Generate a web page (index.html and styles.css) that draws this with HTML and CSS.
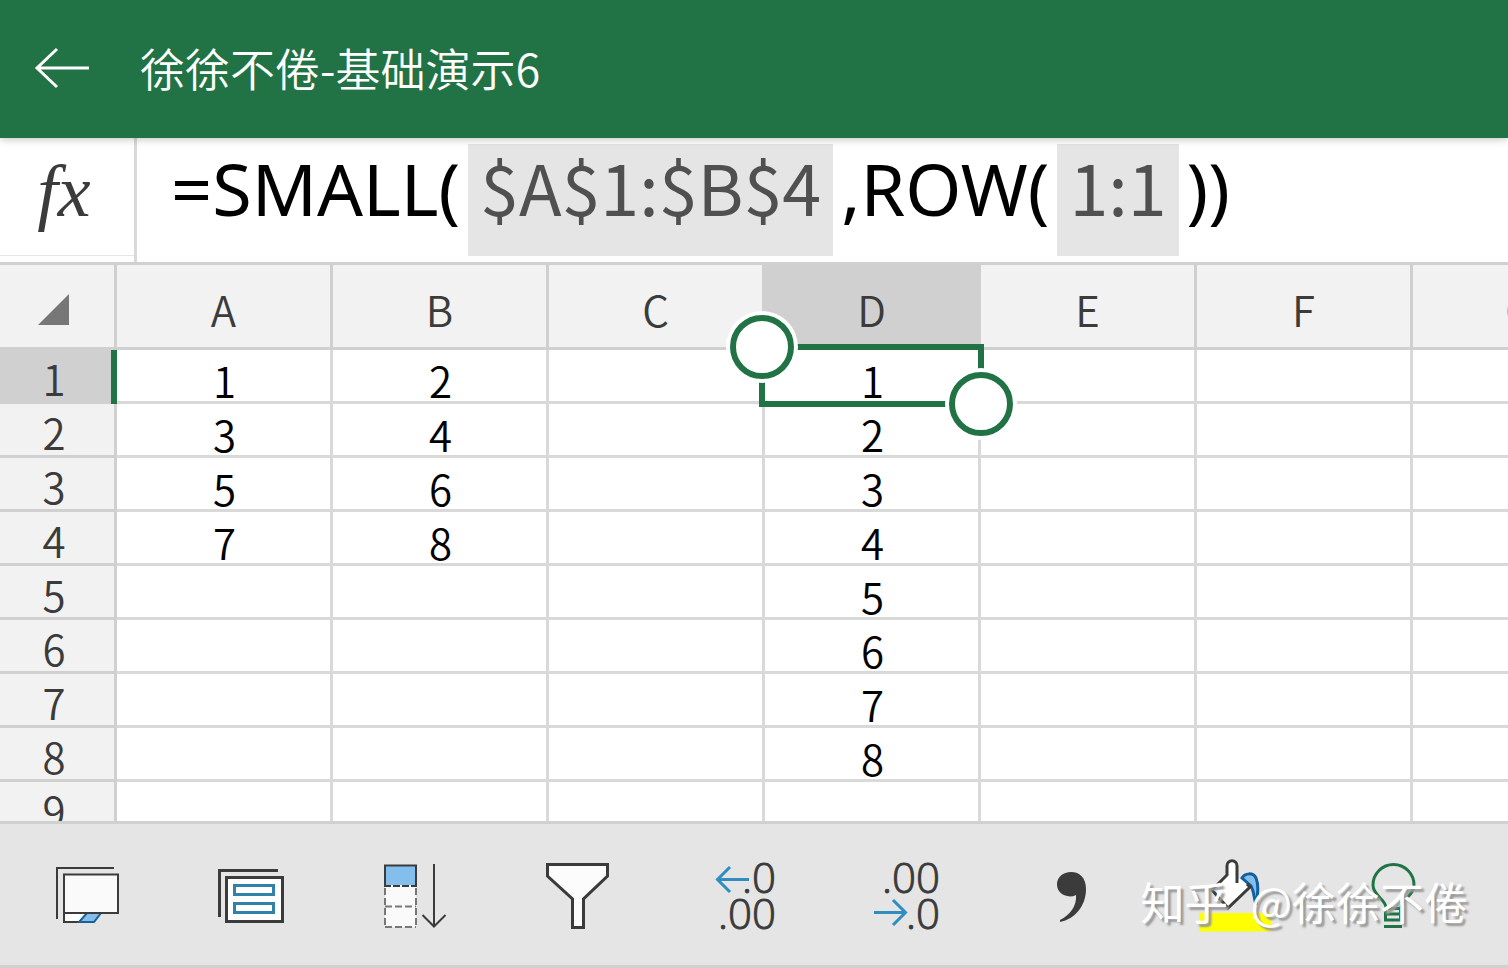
FILE: index.html
```html
<!DOCTYPE html>
<html lang="zh-CN">
<head>
<meta charset="utf-8">
<meta name="viewport" content="width=device-width, initial-scale=1">
<title>徐徐不倦-基础演示6</title>
<link rel="stylesheet" href="styles.css">
</head>
<body>
<header class="titlebar">
  <button class="back" aria-label="返回">
    <svg width="60" height="48" viewBox="0 0 60 48" fill="none" stroke="#fff" stroke-width="3"><path d="M59 24H7M27 5L7 24L27 43"/></svg>
  </button>
  <h1 class="title">徐徐不倦-基础演示6</h1>
</header>

<section class="formula-bar">
  <button class="fx" aria-label="插入函数">fx</button>
  <div class="formula" role="textbox" aria-label="编辑栏" contenteditable="true" spellcheck="false"><span>=SMALL(</span><span class="ref">$A$1:$B$4</span><span>,ROW(</span><span class="ref">1:1</span><span>))</span></div>
</section>

<main class="sheet">
  <table class="grid">
    <colgroup><col class="col-head"><col><col><col><col><col><col><col></colgroup>
    <thead>
      <tr>
        <th class="corner"><svg width="31" height="31" viewBox="0 0 31 31"><path d="M31 0V31H0Z" fill="#777"/></svg></th>
        <th scope="col">A</th><th scope="col">B</th><th scope="col">C</th><th scope="col" class="active">D</th><th scope="col">E</th><th scope="col">F</th><th scope="col">G</th>
      </tr>
    </thead>
    <tbody>
      <tr><th scope="row" class="active">1</th><td>1</td><td>2</td><td></td><td class="selected">1<div class="selection"><i class="handle start"></i><i class="handle end"></i></div></td><td></td><td></td><td></td></tr>
      <tr><th scope="row">2</th><td>3</td><td>4</td><td></td><td>2</td><td></td><td></td><td></td></tr>
      <tr><th scope="row">3</th><td>5</td><td>6</td><td></td><td>3</td><td></td><td></td><td></td></tr>
      <tr><th scope="row">4</th><td>7</td><td>8</td><td></td><td>4</td><td></td><td></td><td></td></tr>
      <tr><th scope="row">5</th><td></td><td></td><td></td><td>5</td><td></td><td></td><td></td></tr>
      <tr><th scope="row">6</th><td></td><td></td><td></td><td>6</td><td></td><td></td><td></td></tr>
      <tr><th scope="row">7</th><td></td><td></td><td></td><td>7</td><td></td><td></td><td></td></tr>
      <tr><th scope="row">8</th><td></td><td></td><td></td><td>8</td><td></td><td></td><td></td></tr>
      <tr><th scope="row">9</th><td></td><td></td><td></td><td></td><td></td><td></td><td></td></tr>
    </tbody>
  </table>
</main>

<footer class="toolbar">
  <button class="tool" aria-label="工作表"><svg viewBox="0 0 97 96" fill="none" stroke="#3b3b3b" stroke-width="2"><path d="M15 73V22H72"/><path d="M22 67V76H38L46 67Z" fill="#fff"/><path d="M45 67H59L52 76H37Z" fill="#83beec" stroke="#1e5f96"/><path d="M22 28.500H76V67H22Z" fill="#fafafa"/></svg></button>
  <button class="tool" aria-label="卡片视图"><svg viewBox="0 0 97 96" fill="none" stroke="#3b3b3b" stroke-width="3"><path d="M14.500 71V24.500H73"/><path d="M21.500 31.500H77.500V75.500H21.500Z" fill="#fff"/><path d="M29.500 39.500H68.500V48.500H29.500ZM29.500 57.500H68.500V66.500H29.500Z" stroke="#3182a8" fill="#fff"/></svg></button>
  <button class="tool" aria-label="排序"><svg viewBox="0 0 97 96" fill="none" stroke="#3b3b3b" stroke-width="2"><path d="M17 40H48V81H17Z" fill="#fafafa" stroke="none"/><path d="M17 19.500H48V40H17Z" fill="#83beec"/><path d="M17 42V81M48 42V81M17 60.500H48M17 81H48" stroke="#777" stroke-dasharray="7 3"/><path d="M17 40H48" stroke="#fff" stroke-dasharray="2 7" stroke-dashoffset="-6"/><path d="M66 18V80M54.500 69L66 80.500L77.500 69"/></svg></button>
  <button class="tool" aria-label="筛选"><svg viewBox="0 0 97 96"><path d="M16.500 18.500H76.500V30L52.500 53V81.500H41.500V53L16.500 30Z" fill="#fcfcfc" stroke="#3b3b3b" stroke-width="3"/></svg></button>
  <button class="tool" aria-label="增加小数位数"><svg viewBox="0 0 97 96"><path d="M55 33.500H24M36 21L23.500 33.500L36 46" fill="none" stroke="#2f8dc0" stroke-width="3"/><text class="digits" x="82" y="47">.0</text><text class="digits" x="82" y="83">.00</text></svg></button>
  <button class="tool" aria-label="减少小数位数"><svg viewBox="0 0 97 96"><path d="M17 66.500H48M36 54L48.500 66.500L36 79" fill="none" stroke="#2f8dc0" stroke-width="3"/><text class="digits" x="83" y="47">.00</text><text class="digits" x="83" y="83">.0</text></svg></button>
  <button class="tool" aria-label="千位分隔样式"><svg viewBox="0 0 97 96"><path d="M51 26C60 26 66 32 66 43C66 60 55 73 40 76V74C50 69 57 60 56 49C54 50 52 50.500 50 50.500C42 50 37 45 37 38.500C37 31 43 26 51 26Z" fill="#3b3b3b"/></svg></button>
  <button class="tool" aria-label="填充颜色"><svg viewBox="0 0 97 96" fill="none" stroke="#3b3b3b" stroke-width="2.500"><path d="M16 67H88V85.500H16Z" fill="#ff0" stroke="none"/><path d="M59 32C62 27 70 26 73 32C76 39 75 49 73 59C71 52 71 45 68 40Z" fill="#83beec" stroke="#125fa0" stroke-width="3"/><path d="M56 32L67 41L45 62L29 44L44 29V20C44 13 54 13 54 20V37" fill="#fff" stroke="none"/><path d="M64 38L67 41L45 62L29 44L44 29V20C44 13 54 13 54 20V37" stroke-width="3"/></svg></button>
  <button class="tool" aria-label="操作说明搜索"><svg viewBox="0 0 97 96" fill="none" stroke="#217346" stroke-width="3"><path d="M40 62C40 53 27 50 27 39A20.500 20.500 0 0 1 68 39C68 50 55 53 55 62"/><path d="M39.500 62.500H54.500V74H39.500ZM39.500 68H54.500M38 80.500H56"/></svg></button>
  <div class="watermark"><span>知乎</span><span>@徐徐不倦</span></div>
</footer>
</body>
</html>
```

FILE: styles.css
```css
* { box-sizing: border-box; }

body {
  display: flex;
  flex-direction: column;
  height: 100vh;
  margin: 0;
  overflow: hidden;
  background: #fff;
  color: #000;
  font-family: "Noto Sans CJK SC", "Noto Sans", sans-serif;
}

button {
  margin: 0;
  padding: 0;
  border: 0;
  background: none;
  color: inherit;
  font: inherit;
}

svg { display: block; }

.titlebar {
  position: relative;
  z-index: 1;
  display: flex;
  flex: none;
  align-items: center;
  gap: 50px;
  height: 138px;
  padding: 0 30px 3px;
  background: #217346;
  box-shadow: 0 1px 8px rgba(0, 0, 0, 0.25);
  color: #fff;
}

.title {
  margin: 0;
  font-size: 45px;
  font-weight: 350;
  line-height: 60px;
}

.formula-bar {
  display: flex;
  flex: none;
  height: 127px;
  border-bottom: 3px solid #d0d0d0;
}

.fx {
  width: 134px;
  height: 118px;
  padding: 0 6px 12px 0;
  border-bottom: 1px solid #e5e5e5;
  color: #3b3b3b;
  font: italic 74px/96px "Liberation Serif", serif;
}

.formula {
  display: flex;
  flex: 1;
  align-items: flex-start;
  padding: 6px 34px;
  border-left: 3px solid #d9d9d9;
  outline: none;
  font-family: "Noto Sans", sans-serif;
  font-size: 72px;
  line-height: 88px;
  white-space: pre;
}

.ref {
  height: 112px;
  margin: 0 8px;
  padding: 0 12px;
  background: #e5e5e5;
  color: #505050;
  font-family: "Noto Sans CJK SC", sans-serif;
  font-size: 70px;
  line-height: 84px;
}

.sheet {
  flex: 1;
  min-height: 0;
  overflow: hidden;
}

.grid {
  width: 1629px;
  border-collapse: separate;
  border-spacing: 0;
  table-layout: fixed;
  font-size: 42px;
  font-weight: 350;
  line-height: 42px;
}

.col-head { width: 117px; }

.grid th,
.grid td {
  height: 54px;
  padding: 9px 0 0 2px;
  border-right: 3px solid #d9d9d9;
  border-bottom: 3px solid #d9d9d9;
  text-align: center;
  vertical-align: top;
}

.grid th {
  border-color: #d0d0d0;
  background: #f2f2f2;
  color: #3b3b3b;
  font-weight: 350;
}

.grid tbody th { padding: 7px 6px 0 0; }

.grid thead th {
  height: 85px;
  padding: 6px 0 0;
  vertical-align: middle;
}

.grid .corner svg { margin-left: 38px; }

.grid th.active { background: #d0d0d0; }

.grid tbody th.active { position: relative; }

.grid tbody th.active::after {
  position: absolute;
  top: 0;
  right: -3px;
  bottom: -3px;
  width: 6px;
  background: #217346;
  content: "";
}

.grid .selected { position: relative; }

.selection {
  position: absolute;
  inset: -6px;
  border: 6px solid #217346;
}

.handle {
  position: absolute;
  width: 64px;
  height: 64px;
  border: 6px solid #217346;
  border-radius: 50%;
  background: #fff;
  box-shadow: 0 0 0 4px #fff;
}

.start { top: -35px; left: -35px; }

.end { right: -35px; bottom: -35px; }

.toolbar {
  position: relative;
  display: grid;
  flex: none;
  grid-template-columns: repeat(9, 1fr);
  height: 147px;
  padding: 22px 32px 0 9px;
  border-top: 3px solid #d0d0d0;
  border-bottom: 3px solid #d0d0d0;
  background: #e5e5e5;
}

.tool {
  display: flex;
  align-items: flex-start;
  justify-content: center;
}

.tool svg {
  width: 97px;
  height: 96px;
}

.digits {
  fill: #3b3b3b;
  stroke: #3b3b3b;
  stroke-width: 1px;
  font-family: "Open Sans", "Noto Sans", sans-serif;
  font-size: 42px;
  font-weight: 300;
  text-anchor: end;
}

.watermark {
  position: absolute;
  right: 40px;
  bottom: 32px;
  display: flex;
  gap: 22px;
  color: #fff;
  font-size: 44px;
  line-height: 64px;
  text-shadow: 3px 3px 2px #999;
  white-space: nowrap;
  pointer-events: none;
}
```
